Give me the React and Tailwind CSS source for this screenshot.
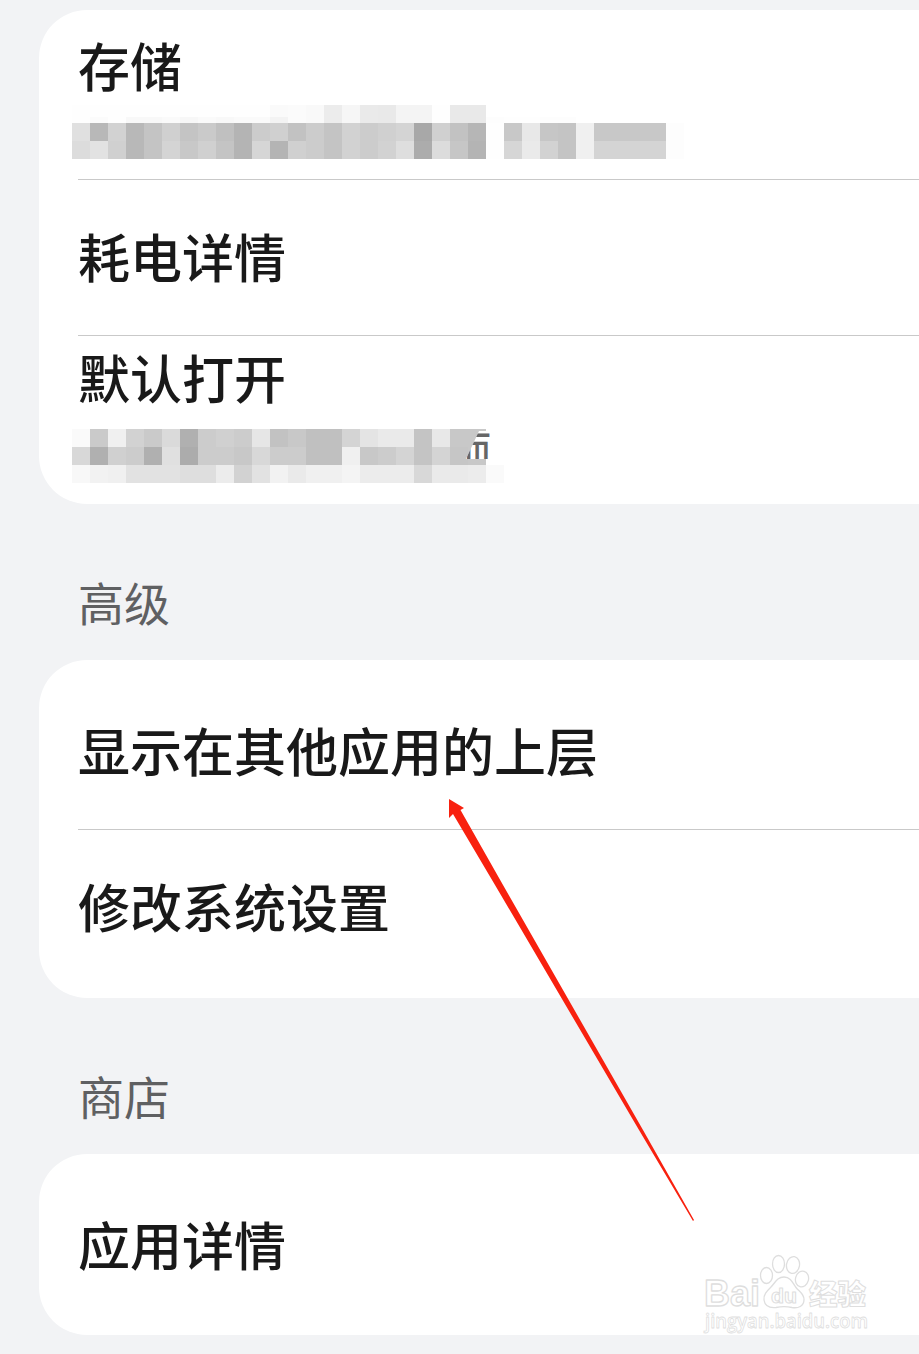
import React from "react";

// grey levels of the pixelated captions, one entry per 18px block
const STORAGE_ROWS = [
  { h: 12, cells: "fe fe fe fe fe fe fe fe fe fe fe fa fb f9 ec f6 ea e9 f4 f4 fe e9 e9" },
  { h: 6, cells: "fe fb fe f8 f8 fa f7 fa f8 fa fa f3 fb f9 ec f6 ea e9 f4 f4 fe e9 e9 fd fe fe fd fd" },
  { h: 18, cells: "e0 b8 d2 b8 c4 d0 c4 ca c0 b4 cc d0 c2 cc c4 d2 cc d0 d4 a8 d0 c2 b6 fe c8 e8 c6 c4 f0 c8 c8 c8 c8 fd" },
  { h: 18, cells: "dc e2 d0 b8 c4 d4 c8 d0 c4 b4 d6 b4 d0 cc c4 d2 cc d2 de ac dc c6 b4 fe d6 ea d2 c4 f0 d4 d4 d4 d4 fd" },
];

const OPEN_ROWS = [
  { h: 18, cells: "fa ca f0 d2 ca da b0 cc d0 cc e6 c2 c8 c0 c0 d4 e4 ea ea c4 e8 c8 c8" },
  { h: 18, cells: "d8 b0 d0 cc b0 e0 ac cc cc c8 d8 cc cc c0 c0 f0 c8 cc d4 c4 d4 c6 c8" },
  { h: 18, cells: "f8 f2 f0 e2 e2 e2 de de ec d2 e2 f2 ea f0 f0 f4 ec ec ec d8 ea ea ec fa" },
];

function Mosaic({ rows }) {
  return (
    <div className="-ml-1.5">
      {rows.map((row, i) => (
        <div key={i} className="flex" style={{ height: row.h }}>
          {row.cells.split(" ").map((c, j) => (
            <span key={j} className="w-[18px] h-full" style={{ backgroundColor: `#${c}${c}${c}` }} />
          ))}
        </div>
      ))}
    </div>
  );
}

function Title({ children }) {
  return (
    <div className="text-[52px] leading-[60px] font-medium text-[#191919] whitespace-nowrap">{children}</div>
  );
}

function Card({ children }) {
  return <section className="ml-[39px] pl-[39px] bg-white rounded-l-[48px]">{children}</section>;
}

function SectionLabel({ children }) {
  return <h2 className="pl-[78px] text-[46px] leading-[60px] text-[#5f6062]">{children}</h2>;
}

function Watermark() {
  return (
    <svg
      className="absolute left-[700px] top-[1250px]"
      width="180"
      height="86"
      viewBox="0 0 180 86"
      fill="#fff"
      stroke="#dedede"
      strokeWidth="1.3"
      strokeLinejoin="round"
    >
      <ellipse cx="66.500" cy="25.500" rx="6" ry="8" />
      <ellipse cx="78.500" cy="14" rx="6" ry="8.500" />
      <ellipse cx="93" cy="15" rx="6.500" ry="8.500" transform="rotate(10 93 15)" />
      <ellipse cx="102" cy="29" rx="6.500" ry="8" transform="rotate(15 102 29)" />
      <path d="M84 27c-7 0-9 6-13 10s-8 8-7 13c1 7 7 8 12 7.500c5-1 11-1 16 0c6 1 12-1 12-8c0-6-5-8-8-12s-5-10.500-12-10.500z" />
      <g fontFamily="Liberation Sans, sans-serif" fontWeight="700">
        <text x="4" y="56" fontSize="37" textLength="56" lengthAdjust="spacingAndGlyphs">Bai</text>
        <text x="71" y="53" fontSize="20" strokeWidth="1" textLength="26" lengthAdjust="spacingAndGlyphs">du</text>
      </g>
      <text x="109" y="54.500" fontSize="28.500" fontWeight="900" strokeWidth="1" fontFamily="Noto Sans CJK SC, sans-serif">
        经验
      </text>
      <text
        x="5"
        y="77.500"
        fontSize="20"
        fontWeight="600"
        strokeWidth="0.8"
        fontFamily="Open Sans, sans-serif"
        textLength="163"
        lengthAdjust="spacingAndGlyphs"
      >
        jingyan.baidu.com
      </text>
    </svg>
  );
}

export default function App() {
  return (
    <main className="relative w-[919px] h-[1354px] overflow-hidden bg-[#f2f3f5] pt-[10px] font-['Noto_Sans_CJK_SC',sans-serif]">
      <Card>
        <div className="h-[170px] pt-[25px] border-b border-[#c9c9c9]">
          <Title>存储</Title>
          <div className="pt-[10px]">
            <Mosaic rows={STORAGE_ROWS} />
          </div>
        </div>
        <div className="h-[156px] pt-[46px] border-b border-[#c9c9c9]">
          <Title>耗电详情</Title>
        </div>
        <div className="h-[168px] pt-[11px]">
          <Title>默认打开</Title>
          <div className="relative pt-[22px]">
            <Mosaic rows={OPEN_ROWS} />
            {/* last glyph left uncovered by the mosaic */}
            <span className="absolute left-[388px] top-[24px] w-[26px] h-[28px] bg-white text-[#666] [clip-path:polygon(50%_0,100%_0,100%_100%,0_100%)]">
              <span className="block -mt-[2px] -ml-[11px] w-9 text-[36px] leading-9 font-medium">而</span>
            </span>
          </div>
        </div>
      </Card>

      <div className="h-[156px] pt-[67px]">
        <SectionLabel>高级</SectionLabel>
      </div>
      <Card>
        <div className="h-[170px] pt-[60px] border-b border-[#c9c9c9]">
          <Title>显示在其他应用的上层</Title>
        </div>
        <div className="h-[168px] pt-[46px]">
          <Title>修改系统设置</Title>
        </div>
      </Card>

      <div className="h-[156px] pt-[67px]">
        <SectionLabel>商店</SectionLabel>
      </div>
      <Card>
        <div className="h-[181px] pt-[60px]">
          <Title>应用详情</Title>
        </div>
      </Card>

      <svg className="absolute left-[440px] top-[790px]" width="260" height="440" viewBox="440 790 260 440" fill="#f8210f">
        <path d="M449 799L464 808L460.500 810L503 885L643 1130L694 1220L693 1221L639 1130L495 885L453 814L449 818z" />
      </svg>
      <Watermark />
    </main>
  );
}
